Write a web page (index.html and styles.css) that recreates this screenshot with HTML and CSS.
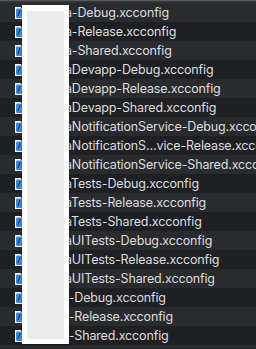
FILE: index.html
```html
<!DOCTYPE html>
<html lang="en-US">
  <head>
    <meta charset="utf-8">
    <meta name="viewport" content="width=device-width">
    <title>Configuration files</title>
    <link rel="stylesheet" href="styles.css">
  </head>

<body>
  <div class="file-list">
    <div class="top-edge"></div>
    <ul class="rows">
      <li><svg class="file-icon" viewBox="0 0 8 12"><path d="M0 0H5.5L8 2.5V12H0Z" fill="#fff"/><rect x="1" y="1.5" width="6.5" height="9.5" rx="1" fill="#3a8be6"/><path d="M5 3L3 9" stroke="#163a86" stroke-width="1.2"/></svg><span class="name">a-Debug.xcconfig</span></li>
      <li><svg class="file-icon" viewBox="0 0 8 12"><path d="M0 0H5.5L8 2.5V12H0Z" fill="#fff"/><rect x="1" y="1.5" width="6.5" height="9.5" rx="1" fill="#3a8be6"/><path d="M5 3L3 9" stroke="#163a86" stroke-width="1.2"/></svg><span class="name">a-Release.xcconfig</span></li>
      <li><svg class="file-icon" viewBox="0 0 8 12"><path d="M0 0H5.5L8 2.5V12H0Z" fill="#fff"/><rect x="1" y="1.5" width="6.5" height="9.5" rx="1" fill="#3a8be6"/><path d="M5 3L3 9" stroke="#163a86" stroke-width="1.2"/></svg><span class="name">a-Shared.xcconfig</span></li>
      <li><svg class="file-icon" viewBox="0 0 8 12"><path d="M0 0H5.5L8 2.5V12H0Z" fill="#fff"/><rect x="1" y="1.5" width="6.5" height="9.5" rx="1" fill="#3a8be6"/><path d="M5 3L3 9" stroke="#163a86" stroke-width="1.2"/></svg><span class="name">aDevapp-Debug.xcconfig</span></li>
      <li><svg class="file-icon" viewBox="0 0 8 12"><path d="M0 0H5.5L8 2.5V12H0Z" fill="#fff"/><rect x="1" y="1.5" width="6.5" height="9.5" rx="1" fill="#3a8be6"/><path d="M5 3L3 9" stroke="#163a86" stroke-width="1.2"/></svg><span class="name">aDevapp-Release.xcconfig</span></li>
      <li><svg class="file-icon" viewBox="0 0 8 12"><path d="M0 0H5.5L8 2.5V12H0Z" fill="#fff"/><rect x="1" y="1.5" width="6.5" height="9.5" rx="1" fill="#3a8be6"/><path d="M5 3L3 9" stroke="#163a86" stroke-width="1.2"/></svg><span class="name">aDevapp-Shared.xcconfig</span></li>
      <li><svg class="file-icon" viewBox="0 0 8 12"><path d="M0 0H5.5L8 2.5V12H0Z" fill="#fff"/><rect x="1" y="1.5" width="6.5" height="9.5" rx="1" fill="#3a8be6"/><path d="M5 3L3 9" stroke="#163a86" stroke-width="1.2"/></svg><span class="name">aNotificationService-Debug.xcconfig</span></li>
      <li><svg class="file-icon" viewBox="0 0 8 12"><path d="M0 0H5.5L8 2.5V12H0Z" fill="#fff"/><rect x="1" y="1.5" width="6.5" height="9.5" rx="1" fill="#3a8be6"/><path d="M5 3L3 9" stroke="#163a86" stroke-width="1.2"/></svg><span class="name">aNotificationS…vice-Release.xcconfig</span></li>
      <li><svg class="file-icon" viewBox="0 0 8 12"><path d="M0 0H5.5L8 2.5V12H0Z" fill="#fff"/><rect x="1" y="1.5" width="6.5" height="9.5" rx="1" fill="#3a8be6"/><path d="M5 3L3 9" stroke="#163a86" stroke-width="1.2"/></svg><span class="name">aNotificationService-Shared.xcconfig</span></li>
      <li><svg class="file-icon" viewBox="0 0 8 12"><path d="M0 0H5.5L8 2.5V12H0Z" fill="#fff"/><rect x="1" y="1.5" width="6.5" height="9.5" rx="1" fill="#3a8be6"/><path d="M5 3L3 9" stroke="#163a86" stroke-width="1.2"/></svg><span class="name">aTests-Debug.xcconfig</span></li>
      <li><svg class="file-icon" viewBox="0 0 8 12"><path d="M0 0H5.5L8 2.5V12H0Z" fill="#fff"/><rect x="1" y="1.5" width="6.5" height="9.5" rx="1" fill="#3a8be6"/><path d="M5 3L3 9" stroke="#163a86" stroke-width="1.2"/></svg><span class="name">aTests-Release.xcconfig</span></li>
      <li><svg class="file-icon" viewBox="0 0 8 12"><path d="M0 0H5.5L8 2.5V12H0Z" fill="#fff"/><rect x="1" y="1.5" width="6.5" height="9.5" rx="1" fill="#3a8be6"/><path d="M5 3L3 9" stroke="#163a86" stroke-width="1.2"/></svg><span class="name">aTests-Shared.xcconfig</span></li>
      <li><svg class="file-icon" viewBox="0 0 8 12"><path d="M0 0H5.5L8 2.5V12H0Z" fill="#fff"/><rect x="1" y="1.5" width="6.5" height="9.5" rx="1" fill="#3a8be6"/><path d="M5 3L3 9" stroke="#163a86" stroke-width="1.2"/></svg><span class="name">aUITests-Debug.xcconfig</span></li>
      <li><svg class="file-icon" viewBox="0 0 8 12"><path d="M0 0H5.5L8 2.5V12H0Z" fill="#fff"/><rect x="1" y="1.5" width="6.5" height="9.5" rx="1" fill="#3a8be6"/><path d="M5 3L3 9" stroke="#163a86" stroke-width="1.2"/></svg><span class="name">aUITests-Release.xcconfig</span></li>
      <li><svg class="file-icon" viewBox="0 0 8 12"><path d="M0 0H5.5L8 2.5V12H0Z" fill="#fff"/><rect x="1" y="1.5" width="6.5" height="9.5" rx="1" fill="#3a8be6"/><path d="M5 3L3 9" stroke="#163a86" stroke-width="1.2"/></svg><span class="name">aUITests-Shared.xcconfig</span></li>
      <li><svg class="file-icon" viewBox="0 0 8 12"><path d="M0 0H5.5L8 2.5V12H0Z" fill="#fff"/><rect x="1" y="1.5" width="6.5" height="9.5" rx="1" fill="#3a8be6"/><path d="M5 3L3 9" stroke="#163a86" stroke-width="1.2"/></svg><span class="name">t-Debug.xcconfig</span></li>
      <li><svg class="file-icon" viewBox="0 0 8 12"><path d="M0 0H5.5L8 2.5V12H0Z" fill="#fff"/><rect x="1" y="1.5" width="6.5" height="9.5" rx="1" fill="#3a8be6"/><path d="M5 3L3 9" stroke="#163a86" stroke-width="1.2"/></svg><span class="name">t-Release.xcconfig</span></li>
      <li><svg class="file-icon" viewBox="0 0 8 12"><path d="M0 0H5.5L8 2.5V12H0Z" fill="#fff"/><rect x="1" y="1.5" width="6.5" height="9.5" rx="1" fill="#3a8be6"/><path d="M5 3L3 9" stroke="#163a86" stroke-width="1.2"/></svg><span class="name">t-Shared.xcconfig</span></li>
      <li></li>
    </ul>
    <div class="redaction"><div class="redaction-fill"></div></div>
  </div>
</body>

</html>
```

FILE: styles.css
```css
body {
  margin: 0;
  background: #2a2b2f;
  font-family: Inter, "Noto Sans", sans-serif;
  overflow: hidden;
}

.file-list {
  position: relative;
  width: 256px;
  height: 349px;
  overflow: hidden;
}

.top-edge {
  height: 3px;
  background: linear-gradient(#58595c 0, #58595c 1px, #3a3b3e 1px, #2c2d31 3px);
}

.rows {
  list-style: none;
  margin: 0;
  padding: 0;
}

.rows li {
  display: flex;
  align-items: center;
  height: 19px;
  background: #2a2b2f;
  white-space: nowrap;
}

.rows li:nth-child(even) {
  background: #1f2024;
}

.file-icon {
  flex: none;
  width: 8px;
  height: 12px;
  margin-left: 15px;
  margin-right: 42px;
}

.name {
  color: #dedede;
  font-size: 12.5px;
  line-height: 19px;
  letter-spacing: -0.15px;
}

.redaction {
  position: absolute;
  left: 22px;
  top: 5px;
  width: 47px;
  height: 339px;
  box-sizing: border-box;
  padding: 6px 5px 5px 5px;
  background: #fff;
  box-shadow: 0 1px 2px rgba(0, 0, 0, 0.4);
}

.redaction-fill {
  height: 100%;
  background: #ebebeb;
}
```
